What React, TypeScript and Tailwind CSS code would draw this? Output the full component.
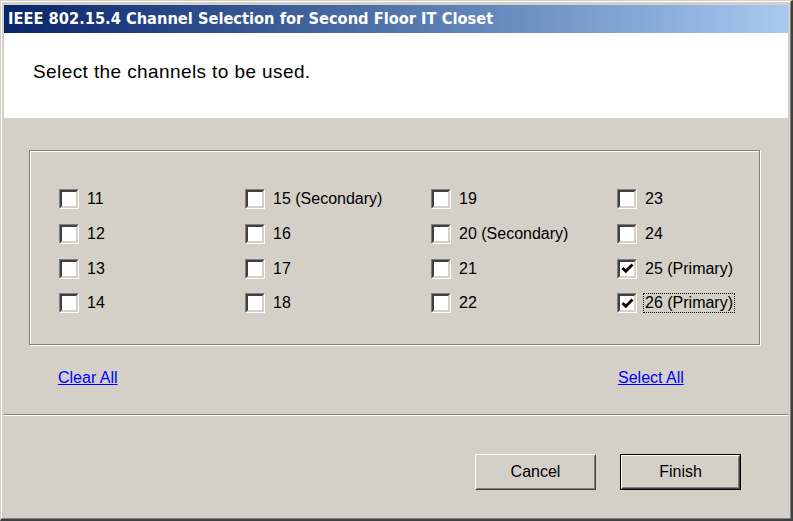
import React from "react";

const channels: { n: number; label: string; checked?: boolean; focus?: boolean }[][] = [
  [
    { n: 11, label: "11" },
    { n: 12, label: "12" },
    { n: 13, label: "13" },
    { n: 14, label: "14" },
  ],
  [
    { n: 15, label: "15 (Secondary)" },
    { n: 16, label: "16" },
    { n: 17, label: "17" },
    { n: 18, label: "18" },
  ],
  [
    { n: 19, label: "19" },
    { n: 20, label: "20 (Secondary)" },
    { n: 21, label: "21" },
    { n: 22, label: "22" },
  ],
  [
    { n: 23, label: "23" },
    { n: 24, label: "24" },
    { n: 25, label: "25 (Primary)", checked: true },
    { n: 26, label: "26 (Primary)", checked: true, focus: true },
  ],
];

function CheckBox({ checked }: { checked?: boolean }) {
  return (
    <div className="w-[20px] h-[20px] flex border border-t-[#808080] border-l-[#808080] border-b-white border-r-white shrink-0">
      <div className="flex-1 flex items-center justify-center border-2 border-t-[#404040] border-l-[#404040] border-b-[#d4d0c8] border-r-[#d4d0c8] bg-white">
        {checked && (
          <svg width="13" height="13" viewBox="0 0 13 13">
            <path d="M1.5 6 L4.8 9.3 L11.5 2.6" fill="none" stroke="#000" strokeWidth="2.8" strokeLinecap="butt" />
          </svg>
        )}
      </div>
    </div>
  );
}

function Button({ label, isDefault }: { label: string; isDefault?: boolean }) {
  return (
    <div className={`w-[121px] h-[36px] flex ${isDefault ? "border border-black" : ""}`}>
      <div className="flex-1 flex border border-t-white border-l-white border-b-[#404040] border-r-[#404040]">
        <div className="flex-1 flex items-center justify-center border border-t-[#d4d0c8] border-l-[#d4d0c8] border-b-[#808080] border-r-[#808080] text-[16px] text-black">
          {label}
        </div>
      </div>
    </div>
  );
}

export default function App() {
  return (
    <div
      className="w-[793px] h-[521px] flex border border-t-[#d4d0c8] border-l-[#d4d0c8] border-r-2 border-b-2 border-r-[#404040] border-b-[#404040] bg-[#d4d0c8]"
      style={{ fontFamily: '"Liberation Sans", Arial, sans-serif' }}
    >
      <div className="flex-1 flex flex-col border border-t-white border-l-white border-r-[#808080] border-b-[#808080] pt-[3px] px-[2px] pb-[2px]">
        {/* Title bar */}
        <div className="h-[28px] shrink-0 flex items-center pl-[4px] bg-gradient-to-r from-[#0a246a] to-[#a6caf0]">
          <span
            className="text-white font-bold text-[16.3px] leading-none"
            style={{ fontFamily: '"DejaVu Sans Condensed", "DejaVu Sans", sans-serif' }}
          >
            IEEE 802.15.4 Channel Selection for Second Floor IT Closet
          </span>
        </div>

        {/* Header */}
        <div className="h-[85px] shrink-0 bg-white pl-[29px] pt-[29px]">
          <div className="text-[19px] leading-[20px] tracking-[0.4px] text-black">Select the channels to be used.</div>
        </div>

        {/* Body */}
        <div className="flex-1 flex flex-col">
          <div className="ml-[25px] mt-[32px] w-[731px] h-[195px] shrink-0 border border-[#808080] shadow-[inset_1px_1px_0_#fff,1px_1px_0_#fff] pl-[29px] pt-[31px]">
            <div className="flex">
              {channels.map((col, ci) => (
                <div key={ci} className="w-[186px] shrink-0 flex flex-col">
                  {col.map((c) => (
                    <div key={c.n} className="h-[34.67px] flex items-center">
                      <CheckBox checked={c.checked} />
                      <span
                        className={`ml-[6px] text-[16px] leading-[18px] text-black px-[1px] border whitespace-nowrap ${
                          c.focus ? "border-dotted border-black" : "border-transparent"
                        }`}
                      >
                        {c.label}
                      </span>
                    </div>
                  ))}
                </div>
              ))}
            </div>
          </div>

          <div className="mt-[23px] ml-[54px] flex text-[16px] leading-[20px]">
            <span className="w-[560px] shrink-0 text-[#0000ff] underline">Clear All</span>
            <span className="text-[#0000ff] underline">Select All</span>
          </div>

          <div className="mt-[26px] border-t border-t-[#808080] border-b border-b-white" />

          <div className="mt-[38px] flex justify-end gap-[24px] pr-[47px]">
            <Button label="Cancel" />
            <Button label="Finish" isDefault />
          </div>
        </div>
      </div>
    </div>
  );
}
